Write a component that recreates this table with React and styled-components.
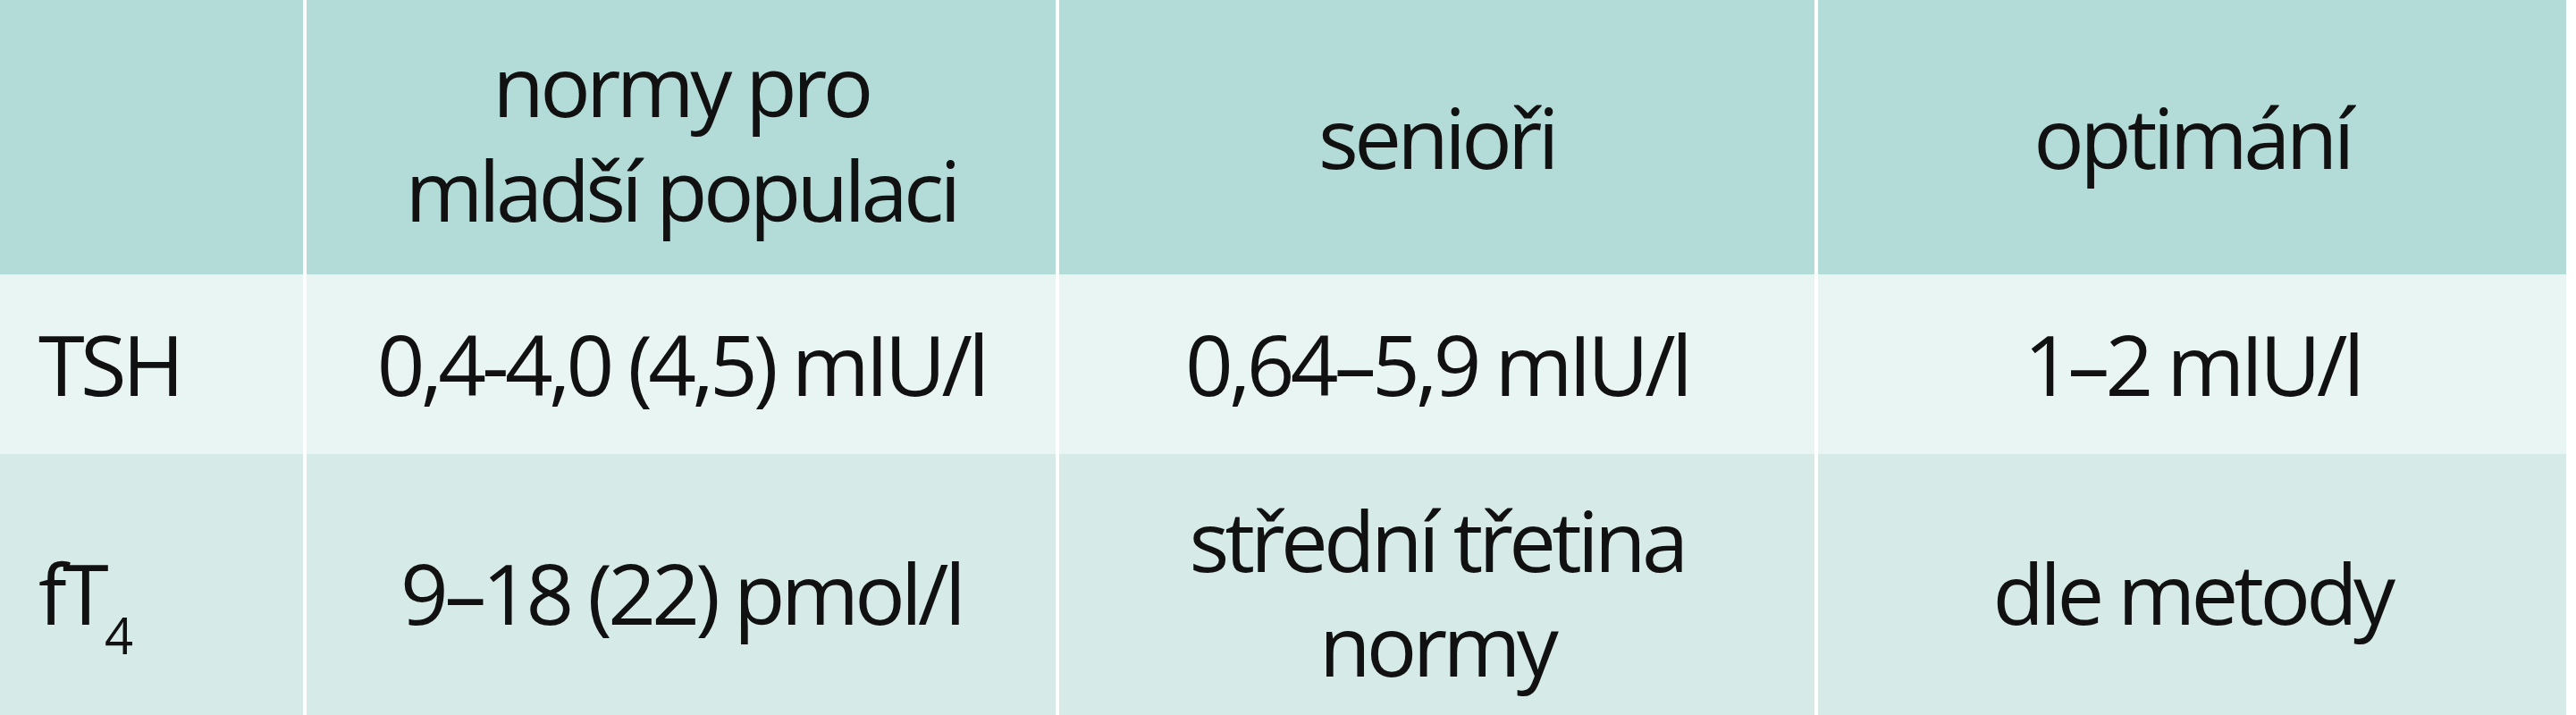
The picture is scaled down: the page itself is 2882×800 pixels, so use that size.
import React from "react";
import styled, { createGlobalStyle } from "styled-components";

const GlobalStyle = createGlobalStyle`
  html, body {
    margin: 0;
    padding: 0;
    background: #ffffff;
    height: 800px;
    overflow: hidden;
  }
`;

const Table = styled.div`
  width: 2871px;
  display: grid;
  grid-template-columns: 339px 838px 845px 837px;
  grid-template-rows: 307px 201px 310px;
  column-gap: 4px;
  background: #ffffff;
  font-family: "Open Sans", "Noto Sans", sans-serif;
  font-size: 94px;
  font-weight: 500;
  line-height: 117px;
  letter-spacing: -0.05em;
  color: #111111;
`;

const rowColors = {
  head: "#b3dbd8",
  light: "#e8f5f3",
  dark: "#d6eae7",
};

const Cell = styled.div`
  display: flex;
  align-items: center;
  justify-content: ${(p) => (p.$label ? "flex-start" : "center")};
  padding-left: ${(p) => (p.$label ? "43px" : "0")};
  text-align: center;
  background: ${(p) => rowColors[p.$tone]};
`;

const Sub = styled.span`
  font-size: 56px;
  line-height: 0;
  vertical-align: -33px;
  letter-spacing: 0;
`;

const rows = [
  {
    tone: "light",
    label: "TSH",
    cells: ["0,4-4,0 (4,5) mIU/l", "0,64–5,9 mIU/l", "1–2 mIU/l"],
  },
  {
    tone: "dark",
    label: (
      <>
        fT<Sub>4</Sub>
      </>
    ),
    cells: [
      "9–18 (22) pmol/l",
      <>
        střední třetina
        <br />
        normy
      </>,
      "dle metody",
    ],
  },
];

const App = () => {
  return (
    <>
      <GlobalStyle />
      <Table>
        <Cell $tone="head" $label />
        <Cell $tone="head">
          <div>
            normy pro
            <br />
            mladší populaci
          </div>
        </Cell>
        <Cell $tone="head">senioři</Cell>
        <Cell $tone="head">optimání</Cell>
        {rows.map((row, i) => (
          <React.Fragment key={i}>
            <Cell $tone={row.tone} $label>
              <div>{row.label}</div>
            </Cell>
            {row.cells.map((c, j) => (
              <Cell key={j} $tone={row.tone}>
                <div>{c}</div>
              </Cell>
            ))}
          </React.Fragment>
        ))}
      </Table>
    </>
  );
};

export default App;
